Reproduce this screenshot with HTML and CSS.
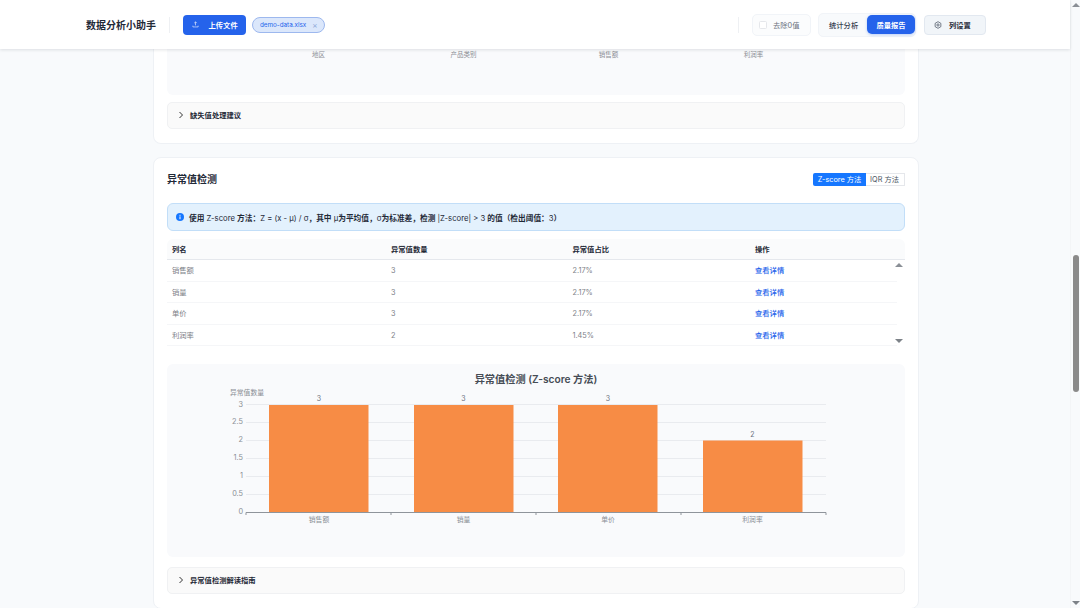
FILE: index.html
```html
<!DOCTYPE html>
<html lang="zh-CN">
<head>
<meta charset="utf-8">
<title>数据分析小助手</title>
<link rel="stylesheet" href="styles.css">
</head>
<body>
<div class="page">
  <div class="column">
    <header class="topbar">
      <h1 class="brand">数据分析小助手</h1>
      <span class="divider"></span>
      <button class="upload">
        <svg class="upload-icon" viewBox="0 0 12 12"><path d="M6 1.5v6M3.8 3.6 6 1.4l2.2 2.2M1.5 8v2.2h9V8"/></svg>
        上传文件
      </button>
      <span class="chip">demo-data.xlsx<span class="chip-x">×</span></span>
      <span class="spacer"></span>
      <span class="divider"></span>
      <label class="zero"><span class="checkbox"></span>去除0值</label>
      <div class="segment">
        <span class="seg-item">统计分析</span>
        <span class="seg-item seg-active">质量报告</span>
      </div>
      <button class="columns">
        <svg class="gear" viewBox="0 0 12 12"><path d="M6 1 10.3 3.5v5L6 11 1.7 8.500v-5Z"/><circle cx="6" cy="6" r="1.700"/></svg>
        列设置
      </button>
    </header>
    <main class="content">
      <section class="card card-clipped">
        <div class="chart-stub">
          <span class="stub-label">地区</span>
          <span class="stub-label">产品类别</span>
          <span class="stub-label">销售额</span>
          <span class="stub-label">利润率</span>
        </div>
        <div class="accordion accordion-top">
          <svg class="chev" viewBox="0 0 6 8"><path d="M1.500 1 4.500 4l-3 3"/></svg>
          缺失值处理建议
        </div>
      </section>
      <section class="card card-main">
        <div class="card-head">
          <h2 class="card-title">异常值检测</h2>
          <div class="methods">
            <span class="method method-on">Z-score 方法</span>
            <span class="method">IQR 方法</span>
          </div>
        </div>
        <div class="alert">
          <svg class="info" viewBox="0 0 8 8"><circle cx="4" cy="4" r="4"/><rect class="info-mark" x="3.500" y="3.400" width="1" height="2.800"/><rect class="info-mark" x="3.500" y="1.800" width="1" height="1"/></svg>
          <span><b>使用</b> Z-score <b>方法：</b>Z = (x - μ) / σ<b>，其中</b> μ<b>为平均值，</b>σ<b>为标准差，检测</b> |Z-score| &gt; 3 <b>的值（检出阈值：</b>3<b>）</b></span>
        </div>
        <div class="table">
          <div class="row row-head">
            <span>列名</span><span>异常值数量</span><span>异常值占比</span><span>操作</span>
          </div>
          <div class="rows">
            <div class="row"><span>销售额</span><span>3</span><span>2.17%</span><a class="link">查看详情</a></div>
            <div class="row"><span>销量</span><span>3</span><span>2.17%</span><a class="link">查看详情</a></div>
            <div class="row"><span>单价</span><span>3</span><span>2.17%</span><a class="link">查看详情</a></div>
            <div class="row"><span>利润率</span><span>2</span><span>1.45%</span><a class="link">查看详情</a></div>
            <span class="tri tri-up"></span>
            <span class="tri tri-down"></span>
          </div>
        </div>
        <div class="chart">
          <svg class="chart-svg" viewBox="0 0 738 193">
            <text class="chart-title" x="369" y="18.500">异常值检测 (Z-score 方法)</text>
            <g class="grid">
              <path d="M79 40.500H659M79 58.500H659M79 76.500H659M79 94.500H659M79 112.500H659M79 130.500H659"/>
            </g>
            <g class="ylab">
              <text x="76" y="42.500">3</text>
              <text x="76" y="60">2.5</text>
              <text x="76" y="78">2</text>
              <text x="76" y="96">1.5</text>
              <text x="76" y="114">1</text>
              <text x="76" y="131.500">0.5</text>
              <text x="76" y="149.500">0</text>
            </g>
            <text class="yname" x="80" y="31">异常值数量</text>
            <g class="bars">
              <rect x="102" y="41" width="99.500" height="107"/>
              <rect x="247" y="41" width="99.500" height="107"/>
              <rect x="391" y="41" width="99.500" height="107"/>
              <rect x="536" y="76.500" width="99.500" height="71.500"/>
            </g>
            <path class="axis" d="M79 151V148.500H659V151M224 148.500V151M369 148.500V151M514 148.500V151"/>
            <g class="vals">
              <text x="152" y="36.500">3</text>
              <text x="296.500" y="36.500">3</text>
              <text x="441" y="36.500">3</text>
              <text x="585.500" y="72.500">2</text>
            </g>
            <g class="xlab">
              <text x="152" y="158">销售额</text>
              <text x="296.500" y="158">销量</text>
              <text x="441" y="158">单价</text>
              <text x="585.500" y="158">利润率</text>
            </g>
          </svg>
        </div>
        <div class="accordion">
          <svg class="chev" viewBox="0 0 6 8"><path d="M1.500 1 4.500 4l-3 3"/></svg>
          异常值检测解读指南
        </div>
      </section>
    </main>
  </div>
  <aside class="scrollbar">
    <span class="tri tri-up"></span>
    <span class="thumb"></span>
    <span class="tri tri-down"></span>
  </aside>
</div>
</body>
</html>
```

FILE: styles.css
```css
* { box-sizing: border-box; }
html, body { margin: 0; height: 100%; overflow: hidden; }
body {
  font-family: Inter, "Noto Sans CJK SC", sans-serif;
  color: #1f2937;
  background: #f8fafc;
}
.page { display: flex; width: 1080px; height: 608px; }
.column { width: 1070px; display: flex; flex-direction: column; height: 608px; }

.topbar {
  height: 49px;
  flex: none;
  display: flex;
  align-items: center;
  padding-left: 86px;
  background: #fff;
  box-shadow: 0 1px 3px rgba(15, 23, 42, .12);
  position: relative;
  z-index: 2;
}
.brand { margin: 0; font-size: 10px; font-weight: 600; color: #1f2937; line-height: 14px; }
.divider { width: 1px; height: 16px; background: #eef0f3; margin: 0 13px 0 13px; flex: none; }
.upload {
  width: 63px; height: 20px; border: 0; border-radius: 4px;
  background: #2563eb; color: #fff;
  display: flex; align-items: center; padding: 0 0 0 9px; gap: 9.500px;
  font: 600 7.300px Inter, "Noto Sans CJK SC", sans-serif;
}
.upload-icon { width: 7px; height: 7px; fill: none; stroke: #fff; stroke-width: 1; }
.chip {
  margin-left: 6px; width: 73px; height: 16px; border-radius: 8px;
  border: 1px solid #9db8ee; background: #dbe7fb; color: #2563eb;
  display: flex; align-items: center; padding-left: 7px;
  font-size: 6.300px;
}
.chip-x { margin-left: 6px; color: #8ea9d8; font-size: 8px; line-height: 8px; }
.spacer { flex: 1; }
.zero {
  width: 59px; height: 22px; margin-left: 0;
  display: flex; align-items: center; gap: 6px; padding-left: 6px;
  border: 1px solid #f1f4f8; border-radius: 5px; background: #fbfcfd;
  font-size: 7.300px; color: #6b7280;
}
.checkbox { width: 8px; height: 8px; border: 1px solid #e5e7eb; border-radius: 1.500px; background: #fff; }
.segment {
  margin-left: 7px; width: 98px; height: 24px; border-radius: 5px;
  background: #f8fafc; border: 1px solid #f1f4f8;
  display: flex; align-items: center; padding-left: 10px;
  font-size: 7.300px;
}
.seg-item { color: #374151; font-weight: 500; width: 38px; }
.seg-active {
  width: 48px; height: 19px; border-radius: 5px; background: #2563eb; color: #fff;
  font-weight: 600; display: flex; align-items: center; justify-content: center;
  box-shadow: 0 1px 3px rgba(37, 99, 235, .3);
}
.columns {
  margin: 0 84px 0 8px; width: 62px; height: 20px; border-radius: 4px;
  border: 1px solid #e2e8f0; background: #f1f5f9; color: #1f2937;
  display: flex; align-items: center; padding: 0 0 0 9px; gap: 7px;
  font: 600 7.300px Inter, "Noto Sans CJK SC", sans-serif;
}
.gear { width: 8px; height: 8px; fill: none; stroke: #374151; stroke-width: 1; }

.content { flex: 1; overflow: hidden; }
.card {
  width: 766px; margin: 0 0 0 153px; background: #fff;
  border: 1px solid #eef1f5; border-radius: 8px; padding: 0 13px;
}
.card-clipped {
  height: 95px; border-top: 0; border-radius: 0 0 8px 8px;
  display: flex; flex-direction: column;
}
.chart-stub {
  height: 46px; flex: none; background: #f9fafc; border-radius: 0 0 6px 6px;
  display: flex; padding-left: 79px;
}
.stub-label { width: 145px; text-align: center; font-size: 6.500px; color: #8c8f96; line-height: 12px; }
.accordion {
  height: 27px; flex: none; display: flex; align-items: center; gap: 6px; padding: 0 0 1.500px 10px;
  border: 1px solid #f0f1f3; border-radius: 5px; background: #fafafa;
  font-size: 7.300px; font-weight: 600; color: #1f2937;
}
.accordion-top { margin-top: 7px; }
.chev { width: 6px; height: 8px; fill: none; stroke: #333; stroke-width: 1; }

.card-main { margin-top: 13px; height: 452px; padding-top: 13px; }
.card-head { display: flex; justify-content: space-between; align-items: center; height: 16px; }
.card-title { margin: -2px 0 0; font-size: 10px; font-weight: 600; color: #1f2937; }
.methods { display: flex; font-size: 7.300px; height: 13px; }
.method {
  display: flex; align-items: center; padding: 0 5px 0 4px; color: #4b5563;
  border: 1px solid #e5e7eb; border-left: 0; background: #fff;
}
.method-on { width: 53px; background: #1677ff; color: #fff; border: 0; border-radius: 2px 0 0 2px; justify-content: center; padding: 0; }

.alert {
  margin-top: 16px; height: 28px; display: flex; align-items: center; gap: 5px; padding-left: 8px;
  background: #e3f1fd; border: 1px solid #c2def8; border-radius: 6px;
  font-size: 7.700px; font-weight: 400; color: #1f2937; white-space: nowrap;
}
.alert b { font-weight: 600; }
.info { width: 8px; height: 8px; fill: #1677ff; flex: none; }
.info-mark { fill: #fff; }

.table { margin-top: 8px; }
.row {
  display: grid; grid-template-columns: 219px 181.500px 182.500px 1fr;
  align-items: baseline; height: 21.500px; line-height: 21px; padding-left: 5px;
  font-size: 7.300px; color: #7c8087;
  border-bottom: 1px solid #f5f6f8;
}
.row-head {
  height: 21px; line-height: 21px; background: #fafbfc; color: #1f2937; font-weight: 600;
  border-bottom: 1px solid #e5e8ed; border-radius: 6px 6px 0 0;
}
.rows { position: relative; padding-right: 8px; }
.link { color: #2563eb; font-weight: 500; }
.tri { width: 0; height: 0; border-left: 4px solid transparent; border-right: 4px solid transparent; display: block; }
.tri-up { border-bottom: 4.500px solid #8a8f96; }
.tri-down { border-top: 4.500px solid #7d8288; }
.rows .tri { position: absolute; right: 2px; }
.rows .tri-up { top: 3px; }
.rows .tri-down { bottom: 3px; }

.chart { margin-top: 18px; height: 193px; background: #f9fafc; border-radius: 6px; }
.chart-svg { display: block; width: 738px; height: 193px; font-family: Inter, "Noto Sans CJK SC", sans-serif; }
.chart-title { font-size: 10.200px; font-weight: 600; fill: #464c55; text-anchor: middle; }
.grid path { stroke: #e9ebef; stroke-width: 1; fill: none; }
.ylab text { font-size: 7.300px; fill: #8a8e95; text-anchor: end; }
.yname { font-size: 6.800px; fill: #8a8e95; text-anchor: middle; }
.bars rect { fill: #f78c45; }
.axis { fill: none; stroke: #8f949b; stroke-width: 1; }
.vals text { font-size: 7px; fill: #6b7280; text-anchor: middle; }
.xlab text { font-size: 6.800px; fill: #8a8e95; text-anchor: middle; }

.card-main .accordion { margin-top: 10px; }

.scrollbar {
  width: 10px; height: 608px; background: #f8fafc; position: relative; flex: none;
  border-left: 1px solid #f3f5f7;
}
.scrollbar .tri { position: absolute; left: 0.500px; }
.scrollbar .tri-up { top: 3px; }
.scrollbar .tri-down { bottom: 3px; }
.thumb { position: absolute; left: 2px; width: 6px; top: 255px; height: 137px; background: #8a8a8a; border-radius: 3px; }
```
